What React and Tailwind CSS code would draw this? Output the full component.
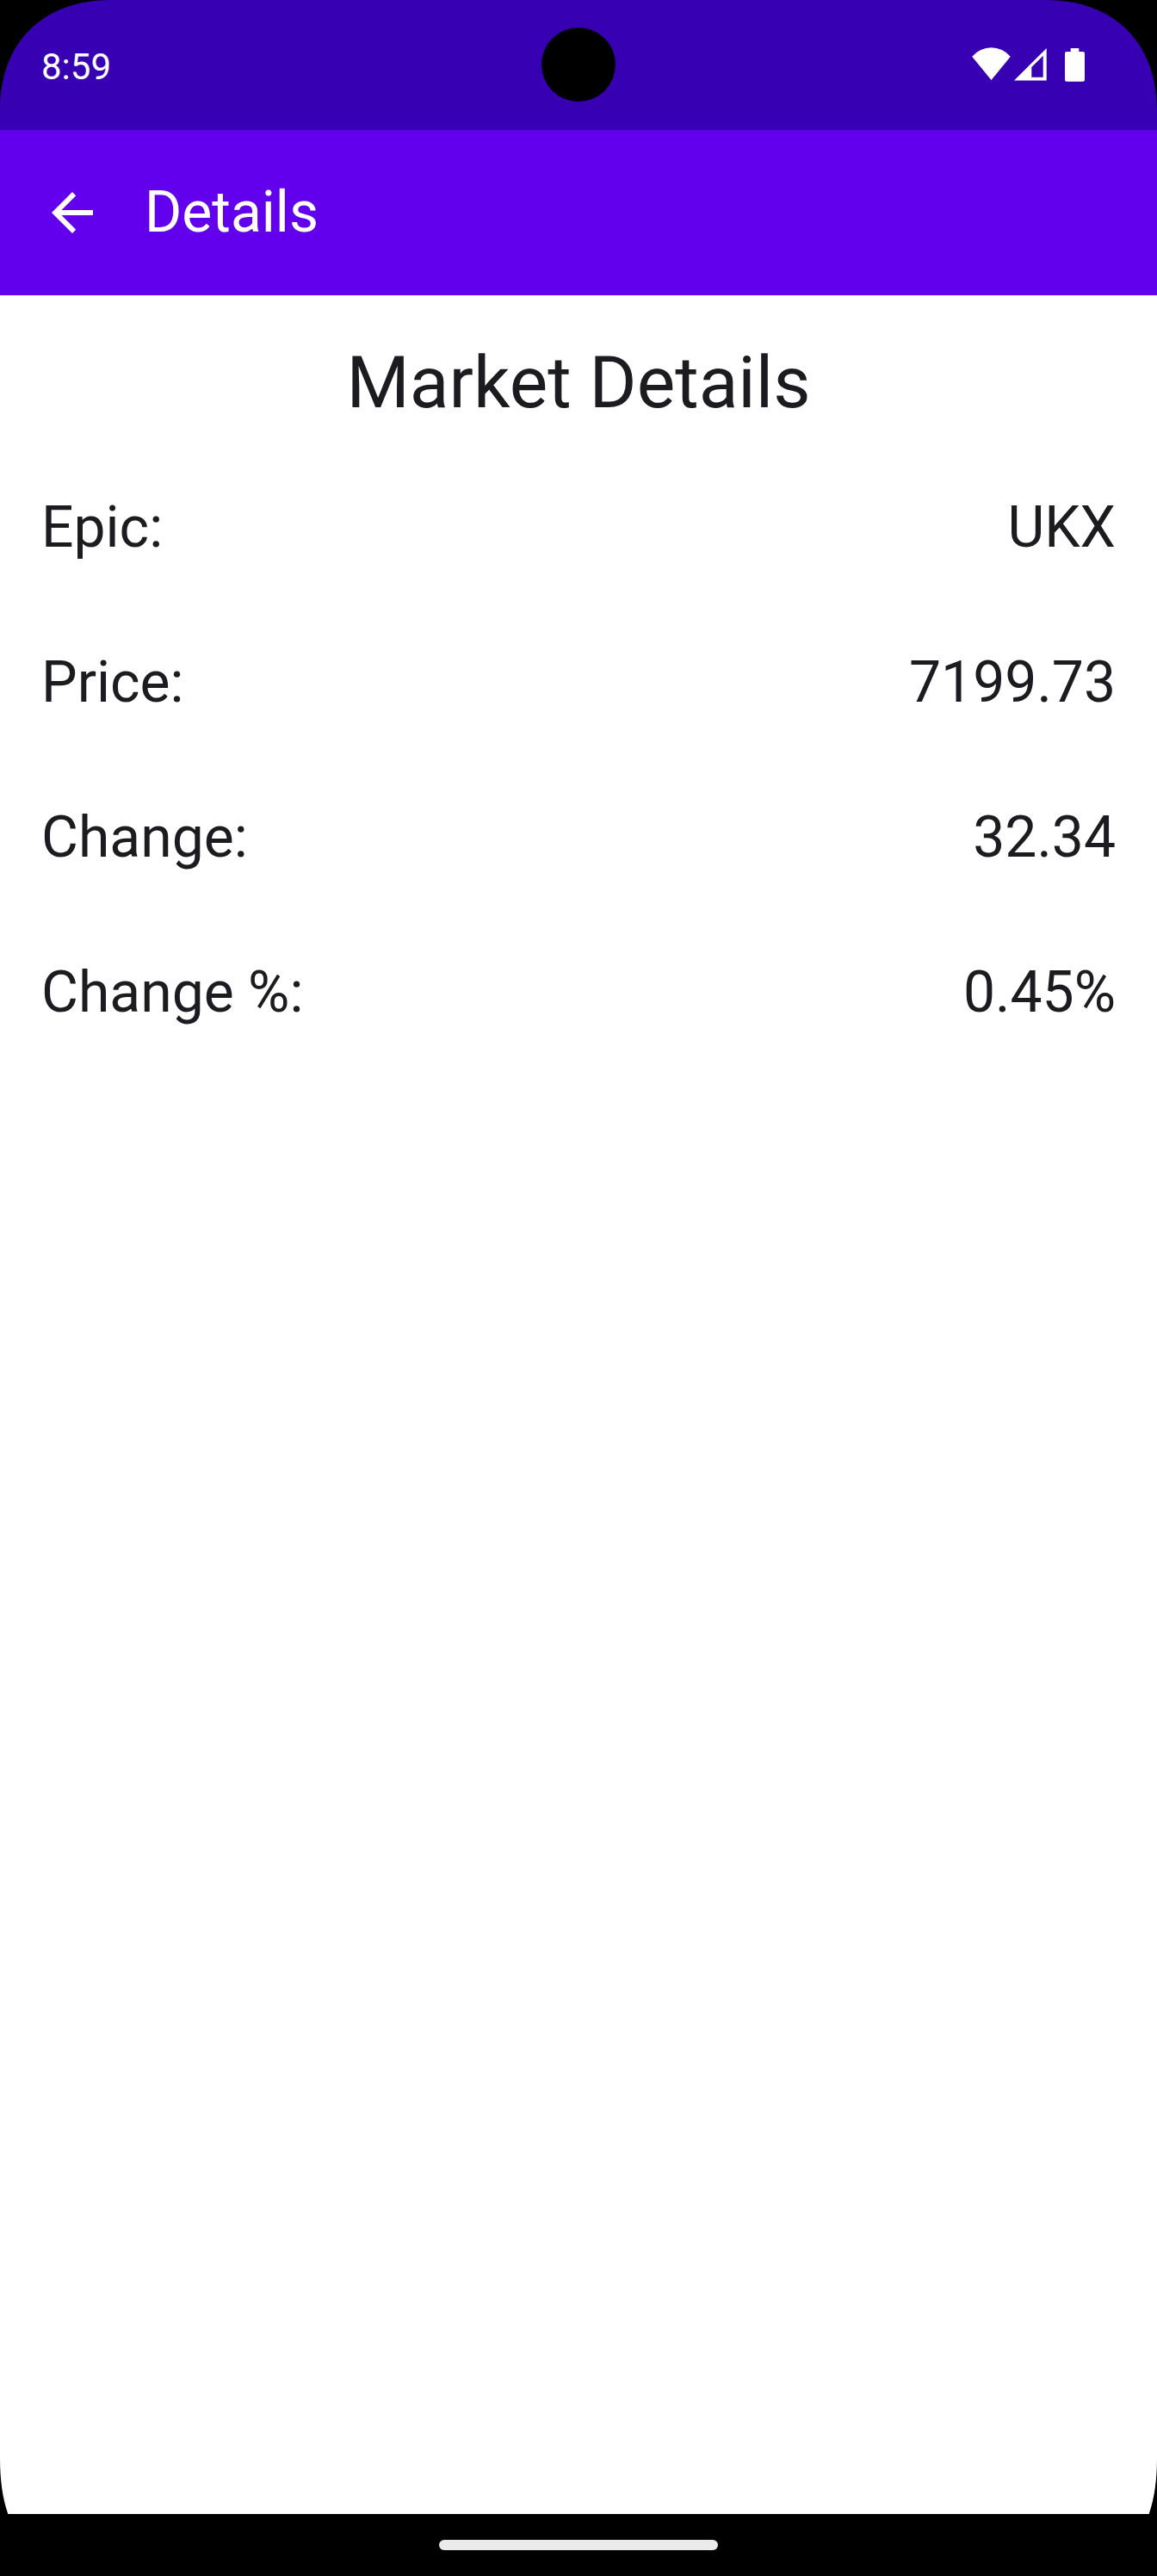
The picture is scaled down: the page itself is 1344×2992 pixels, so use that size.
const rows = [
  ['Epic:', 'UKX'],
  ['Price:', '7199.73'],
  ['Change:', '32.34'],
  ['Change %:', '0.45%'],
];

function TopCorner({ className }) {
  return (
    <svg className={className} viewBox="0 0 130 130" aria-hidden="true">
      <path d="M0 0H129C49.5 0 0 49.5 0 129Z" fill="#000" />
    </svg>
  );
}

function BottomCorner({ className }) {
  return (
    <svg className={className} viewBox="0 0 12 64" aria-hidden="true">
      <path d="M0 0C0 24 3 46 9.3 64H0Z" fill="#000" />
    </svg>
  );
}

function StatusIcons() {
  return (
    <svg className="mt-[45px] h-[60px] w-[140px]" viewBox="0 0 140 60" fill="currentColor">
      <path d="M5.2 20.8A29 29 0 0 1 49.8 20.8L27.5 48Z" />
      <path fillRule="evenodd" d="M54 48.5L91.7 11V48.5ZM74.3 33V44.7H87.7V19.8Z" />
      <path d="M119.7 11H129.3V15H134Q136 15 136 17V47.8Q136 49.8 134 49.8H115Q113 49.8 113 47.8V17Q113 15 115 15H119.7Z" />
    </svg>
  );
}

export default function App() {
  return (
    <div className="relative flex h-[2992px] w-[1344px] flex-col bg-black font-[Roboto,sans-serif] text-[#1c1b1f]">
      <div className="relative flex h-[2920px] flex-col overflow-hidden bg-white">
        <header className="relative flex h-[151px] shrink-0 items-start justify-between bg-[#3700b3] pl-12 pr-[80px] text-white">
          <span className="mt-[53px] text-[42px] leading-[49px]">8:59</span>
          <div className="absolute left-[628.8px] top-[31.6px] size-[86.4px] rounded-full bg-black" />
          <StatusIcons />
        </header>
        <nav className="flex h-[192px] shrink-0 items-start gap-12 bg-[#6200ee] pl-12 text-white">
          <svg className="mt-[60px] size-[72px]" viewBox="0 0 24 24" fill="currentColor">
            <path d="M20 11H7.83l5.59-5.59L12 4l-8 8 8 8 1.41-1.41L7.83 13H20z" />
          </svg>
          <span className="mt-[57px] text-[66px] leading-[77px]">Details</span>
        </nav>
        <main className="flex flex-col px-12">
          <h1 className="mt-[52px] text-center text-[84px] leading-[99px]">Market Details</h1>
          <div className="mt-20 flex flex-col gap-[103px]">
            {rows.map(([label, value]) => (
              <div key={label} className="flex justify-between text-[66px] leading-[77px]">
                <span>{label}</span>
                <span>{value}</span>
              </div>
            ))}
          </div>
        </main>
        <TopCorner className="absolute left-0 top-0 size-[130px]" />
        <TopCorner className="absolute right-0 top-0 size-[130px] -scale-x-100" />
        <BottomCorner className="absolute bottom-0 left-0 h-16 w-3" />
        <BottomCorner className="absolute bottom-0 right-0 h-16 w-3 -scale-x-100" />
      </div>
      <footer className="flex h-[72px] items-center justify-center">
        <div className="h-3 w-[324px] rounded-full bg-[#ebebeb]" />
      </footer>
    </div>
  );
}
